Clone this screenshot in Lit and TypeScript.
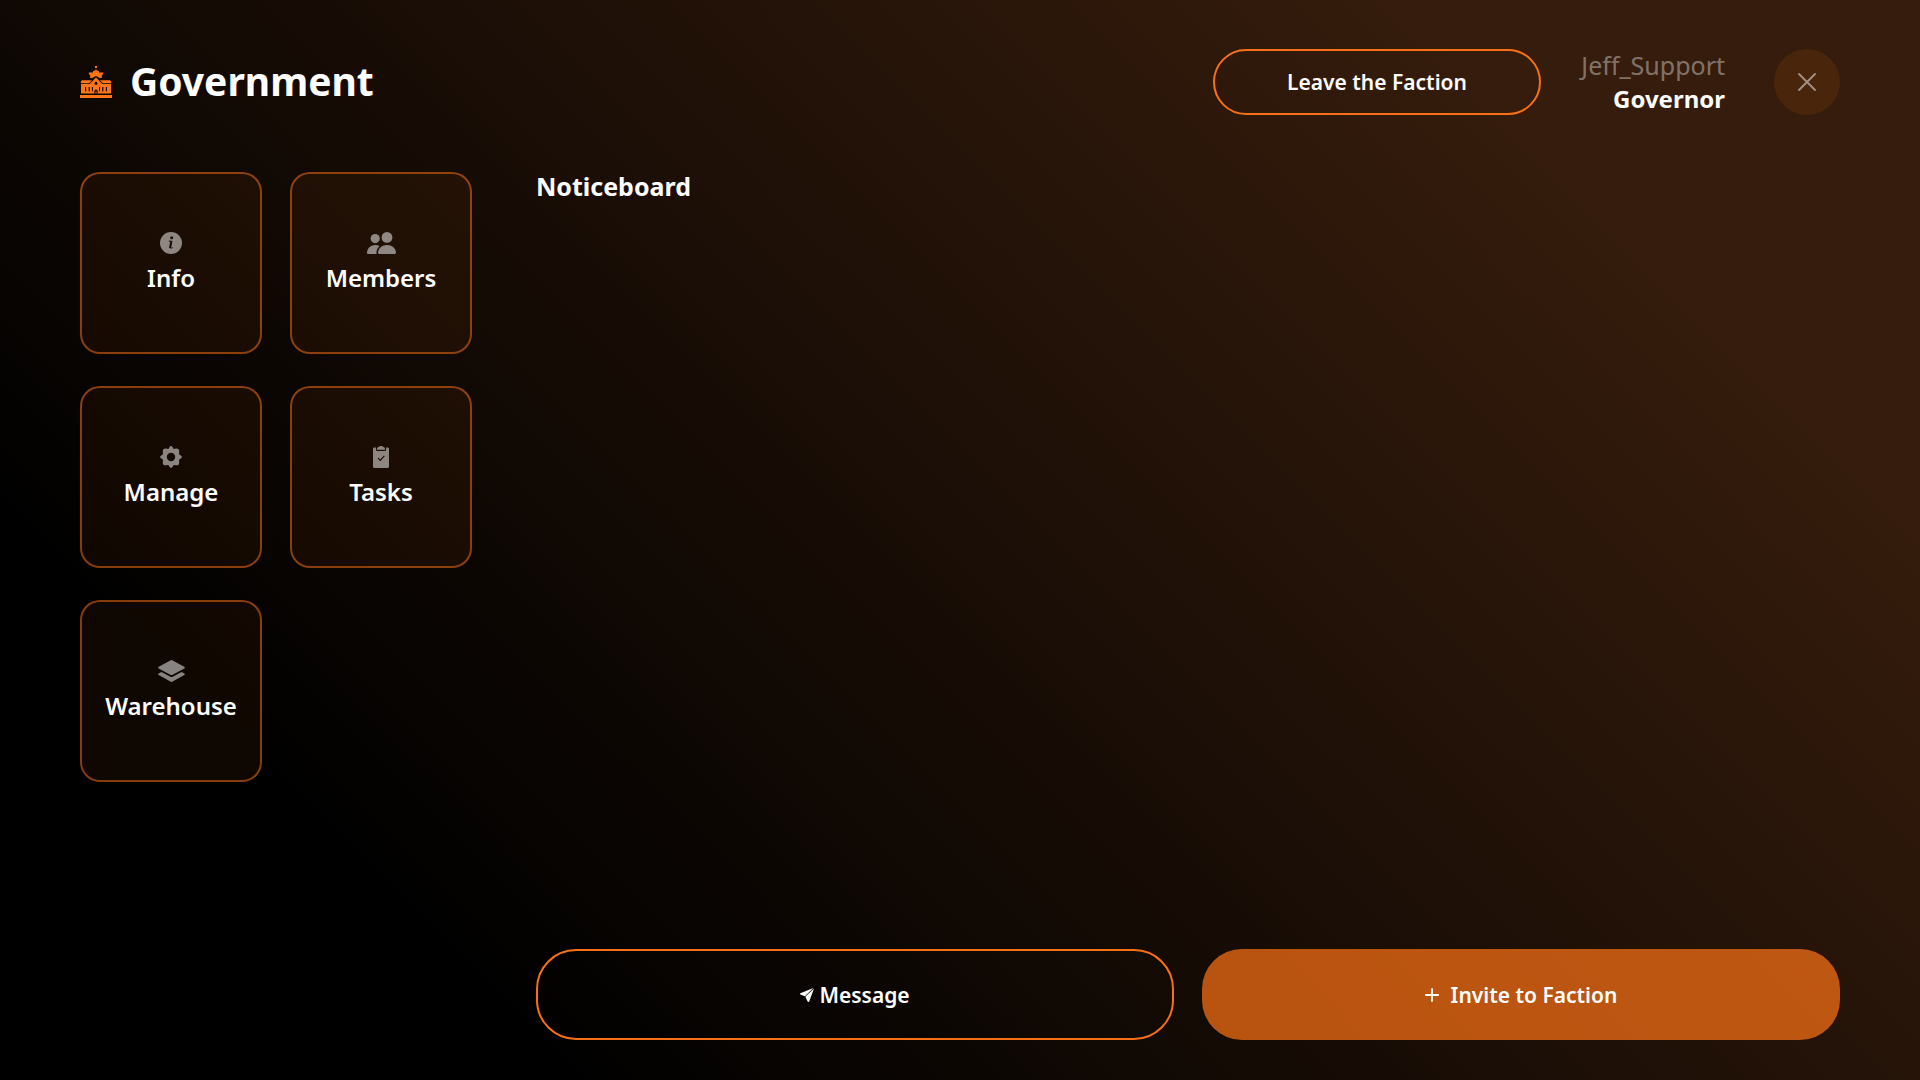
import { LitElement, html, css, TemplateResult } from "lit";
import { customElement, property } from "lit/decorators.js";

interface Section {
  label: string;
  icon: TemplateResult;
}

const infoIcon = html`<svg width="22" height="22" viewBox="0 0 22 22" aria-hidden="true">
  <mask id="info-mask">
    <circle cx="11" cy="11" r="11" fill="#fff" />
    <circle cx="11.7" cy="5.8" r="1.5" fill="#000" />
    <path d="M9.2 9.2H11.6L10.2 15.6Q10 16.8 12.2 15.8" fill="none" stroke="#000" stroke-width="1" stroke-linecap="round" stroke-linejoin="round" />
    <path d="M11.4 9L10 16" stroke="#000" stroke-width="2" />
  </mask>
  <rect width="22" height="22" fill="currentColor" mask="url(#info-mask)" />
</svg>`;

const membersIcon = html`<svg width="29" height="22" viewBox="0 0 29 22" fill="currentColor" aria-hidden="true">
  <circle cx="8.2" cy="6.6" r="4.6" />
  <circle cx="20" cy="5.4" r="5.4" />
  <path d="M0 20.4C0.5 16 4 13 8.2 13C9.8 13 11.2 13.3 12.6 14C10.5 15.8 9.6 18 9.4 20.6C9.4 21.2 9.5 21.6 9.7 22H1.2C0.4 22 0 21.4 0 20.4Z" />
  <path d="M11 20.6C11.4 16 15.2 13 20 13C24.8 13 28.6 16 29 20.6C29 21.5 28.5 22 27.6 22H12.4C11.5 22 11 21.5 11 20.6Z" />
</svg>`;

const gearIcon = html`<svg width="22" height="22" viewBox="0 0 22 22" fill="currentColor" aria-hidden="true">
  <path fill-rule="evenodd" d="M9.4 1.2Q11 -1 12.6 1.2L13.6 3L16.1 2.6Q19.4 2.4 19.2 5.6L19 8.2L20.8 9.4Q23 11 20.8 12.6L19 13.8L19.2 16.4Q19.4 19.6 16.1 19.3L13.6 19L12.6 20.8Q11 23 9.4 20.8L8.4 19L5.9 19.3Q2.6 19.6 2.8 16.4L3 13.8L1.2 12.6Q-1 11 1.2 9.4L3 8.2L2.8 5.6Q2.6 2.4 5.9 2.6L8.4 3ZM11 6.8A4.2 4.2 0 1 0 11 15.2A4.2 4.2 0 1 0 11 6.8Z" />
</svg>`;

const tasksIcon = html`<svg width="16" height="22" viewBox="0 0 16 22" fill="currentColor" aria-hidden="true">
  <path d="M4 2.8C4 1.4 5 1.2 5.6 0.9C6.2 0.2 7 0 8 0C9 0 9.8 0.2 10.4 0.9C11 1.2 12 1.4 12 2.8V3.8H4Z" />
  <path fill-rule="evenodd" d="M1.4 1.6H2.9V3.4Q2.9 4.9 4.4 4.9H11.6Q13.1 4.9 13.1 3.4V1.6H14.6Q16 1.6 16 3V20.4Q16 22 14.4 22H1.6Q0 22 0 20.4V3Q0 1.6 1.4 1.6ZM5.4 11.6L4.6 12.5L7.3 15.2L11.8 10.2L10.9 9.4L7.2 13.4Z" />
</svg>`;

const warehouseIcon = html`<svg width="27" height="22" viewBox="0 0 27 22" fill="currentColor" aria-hidden="true">
  <path d="M12.4 0.4Q13.5 -0.2 14.6 0.4L26.3 6.8Q27.4 7.6 26.3 8.4L14.6 14.8Q13.5 15.4 12.4 14.8L0.7 8.4Q-0.4 7.6 0.7 6.8Z" />
  <path d="M3.4 11.9L12.3 16.8Q13.5 17.4 14.7 16.8L23.6 11.9L26.3 13.4Q27.4 14.2 26.3 15L14.6 21.6Q13.5 22.2 12.4 21.6L0.7 15Q-0.4 14.2 0.7 13.4Z" />
</svg>`;

const capitolIcon = html`<svg width="32" height="32" viewBox="0 0 32 32" fill="currentColor" aria-hidden="true">
  <path d="M15 0H17V2H15ZM15.6 3H16.4V4.4H15.6Z" />
  <path d="M12.9 5.4Q16 3 19.1 5.4V6.4H23.2V8L21.8 9.2V12H20L16 9.9L12 12H10.2V9.2L8.8 8V6.4H12.9Z" />
  <path d="M2 14.2H12L9.2 17.2H0.8V15.6ZM30 14.2H20L22.8 17.2H31.2V15.6Z" />
  <path fill-rule="evenodd" d="M16 11.6L22.4 18H31V27.4H17.6V25A1.6 1.6 0 0 0 14.4 25V27.4H1V18H9.6ZM5 21V25.2H6.2V21ZM8.6 21V25.2H9.8V21ZM11.9 21V25.2H12.9V21ZM19.1 21V25.2H20.1V21ZM22.2 21V25.2H23.4V21ZM25.8 21V25.2H27V21ZM16 15.8A1.3 1.3 0 0 0 14.7 17.1V18.8H17.3V17.1A1.3 1.3 0 0 0 16 15.8Z" />
  <path d="M15.4 25.4H16.6V27.4H15.4ZM0 29H32V32H0Z" />
</svg>`;

const closeIcon = html`<svg width="18" height="18" viewBox="0 0 18 18" fill="none" stroke="currentColor" stroke-width="1.8" stroke-linecap="round" aria-hidden="true">
  <path d="M1 1L17 17M17 1L1 17" />
</svg>`;

const sendIcon = html`<svg width="14" height="14" viewBox="0 0 14 14" fill="currentColor" aria-hidden="true">
  <path d="M0.3 5.3L13.4 0L4.9 8.2L0.4 6.5Q-0.3 5.9 0.3 5.3Z" />
  <path d="M14 0.5L9.2 13.5Q8.4 14.4 7.6 13.5L5.3 8.8Z" />
</svg>`;

const plusIcon = html`<svg width="14" height="14" viewBox="0 0 14 14" fill="none" stroke="currentColor" stroke-width="1.8" stroke-linecap="round" aria-hidden="true">
  <path d="M7 0.9V13.1M0.9 7H13.1" />
</svg>`;

@customElement("faction-tile")
export class FactionTile extends LitElement {
  @property() label = "";
  @property({ attribute: false }) icon?: TemplateResult;

  static styles = css`
    :host {
      display: block;
    }
    .tile {
      box-sizing: border-box;
      display: flex;
      flex-direction: column;
      align-items: center;
      justify-content: center;
      gap: 8px;
      width: 100%;
      aspect-ratio: 1;
      padding: 0;
      border: 2px solid rgba(255, 116, 22, 0.5);
      border-radius: 20px;
      background: rgba(255, 116, 22, 0.06);
      color: #fff;
      font: 600 24px/32px "Noto Sans", sans-serif;
      cursor: pointer;
    }
    .tile:hover {
      background: rgba(255, 116, 22, 0.12);
    }
    .icon {
      display: flex;
      opacity: 0.5;
    }
  `;

  render() {
    return html`<button class="tile" type="button">
      <span class="icon">${this.icon}</span>
      <span>${this.label}</span>
    </button>`;
  }
}

@customElement("app-root")
export class AppRoot extends LitElement {
  private sections: Section[] = [
    { label: "Info", icon: infoIcon },
    { label: "Members", icon: membersIcon },
    { label: "Manage", icon: gearIcon },
    { label: "Tasks", icon: tasksIcon },
    { label: "Warehouse", icon: warehouseIcon },
  ];

  static styles = css`
    :host {
      box-sizing: border-box;
      display: flex;
      flex-direction: column;
      gap: 57px;
      min-height: 100vh;
      padding: 49px 80px 40px;
      background: linear-gradient(45deg, #000 18%, #351c0c 83%);
      color: #fff;
      font-family: "Noto Sans", sans-serif;
    }
    .header {
      display: flex;
      align-items: center;
      justify-content: space-between;
    }
    .brand {
      display: flex;
      align-items: center;
      gap: 18px;
      color: #ff7416;
    }
    .brand svg {
      display: block;
    }
    .title {
      margin: 0;
      padding-bottom: 2px;
      color: #fff;
      font-size: 39px;
      line-height: 52px;
      font-weight: 700;
    }
    .account {
      display: flex;
      align-items: center;
    }
    .button {
      box-sizing: border-box;
      display: flex;
      align-items: center;
      justify-content: center;
      border: 2px solid #f87015;
      background: none;
      color: #fff;
      font: 600 21px/28px "Noto Sans", sans-serif;
      cursor: pointer;
    }
    .leave {
      min-width: 328px;
      height: 66px;
      padding: 0 32px;
      border-radius: 33px;
    }
    .user {
      min-width: 152px;
      margin: 0 49px 0 32px;
      text-align: right;
      font-size: 24px;
      line-height: 33px;
    }
    .name {
      color: rgba(255, 255, 255, 0.4);
      font-size: 25px;
    }
    .rank {
      font-weight: 700;
    }
    .close {
      display: flex;
      align-items: center;
      justify-content: center;
      width: 66px;
      height: 66px;
      padding: 0;
      border: none;
      border-radius: 50%;
      background: rgba(255, 116, 22, 0.1);
      color: rgba(255, 255, 255, 0.5);
      cursor: pointer;
    }
    .body {
      flex: 1;
      display: grid;
      grid-template-columns: 392px 1fr;
      gap: 64px;
    }
    .sections {
      display: grid;
      grid-template-columns: 1fr 1fr;
      align-content: start;
      gap: 32px 28px;
    }
    .board {
      display: flex;
      flex-direction: column;
      justify-content: space-between;
    }
    .heading {
      margin: 0;
      font-size: 25px;
      line-height: 28px;
      font-weight: 700;
    }
    .actions {
      display: grid;
      grid-template-columns: 1fr 1fr;
      gap: 28px;
    }
    .action {
      height: 91px;
      border-radius: 40px;
    }
    .message {
      gap: 5px;
    }
    .invite {
      gap: 12px;
      border: none;
      background: rgba(255, 116, 22, 0.7);
    }
  `;

  render() {
    return html`
      <header class="header">
        <div class="brand">
          ${capitolIcon}
          <h1 class="title">Government</h1>
        </div>
        <div class="account">
          <button class="button leave" type="button">Leave the Faction</button>
          <div class="user">
            <div class="name">Jeff_Support</div>
            <div class="rank">Governor</div>
          </div>
          <button class="close" type="button" aria-label="Close">${closeIcon}</button>
        </div>
      </header>
      <main class="body">
        <nav class="sections">
          ${this.sections.map(
            (s) => html`<faction-tile .label=${s.label} .icon=${s.icon}></faction-tile>`
          )}
        </nav>
        <section class="board">
          <h2 class="heading">Noticeboard</h2>
          <div class="actions">
            <button class="button action message" type="button">${sendIcon}<span>Message</span></button>
            <button class="button action invite" type="button">${plusIcon}<span>Invite to Faction</span></button>
          </div>
        </section>
      </main>
    `;
  }
}
